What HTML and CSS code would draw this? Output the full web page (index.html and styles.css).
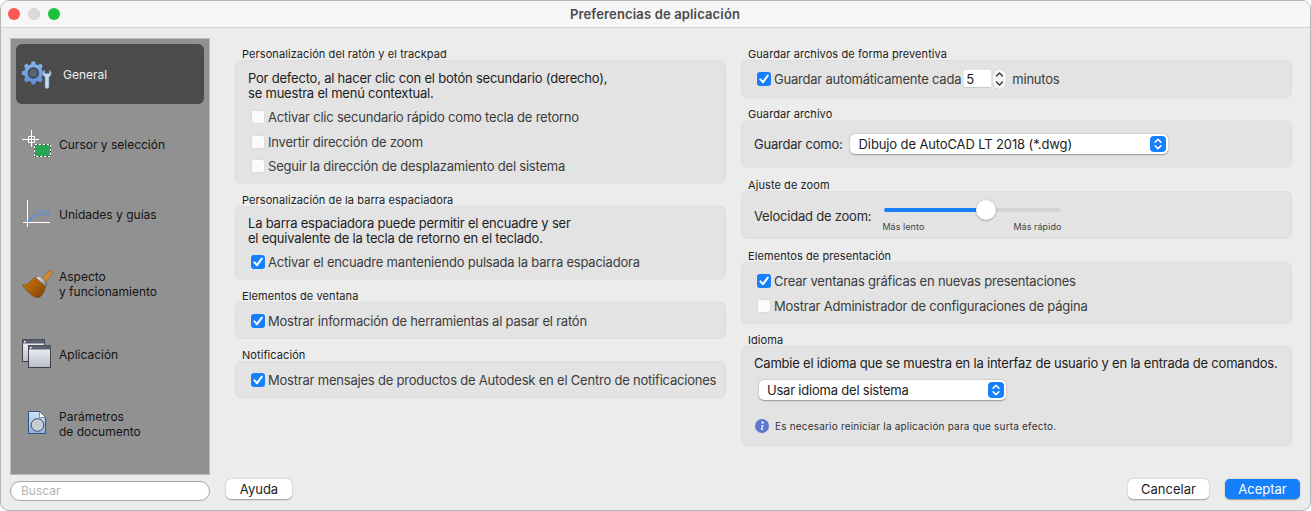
FILE: index.html
```html
<!DOCTYPE html>
<html lang="es">
<head>
<meta charset="utf-8">
<title>Preferencias de aplicación</title>
<link rel="stylesheet" href="styles.css">
</head>
<body>
<svg class="defs" width="0" height="0">
  <symbol id="check" viewBox="0 0 14 14"><path d="M3.4 7.4 L6 10.2 L10.8 3.6" fill="none" stroke="#fff" stroke-width="2" stroke-linecap="round" stroke-linejoin="round"/></symbol>
  <symbol id="updown" viewBox="0 0 16 16"><path d="M5 6.2 L8 3.4 L11 6.2 M5 9.8 L8 12.6 L11 9.8" fill="none" stroke="#fff" stroke-width="1.5" stroke-linecap="round" stroke-linejoin="round"/></symbol>
</svg>
<div class="window">
  <header class="titlebar">
    <div class="lights"><span class="light red"></span><span class="light grey"></span><span class="light green"></span></div>
    <div class="title">Preferencias de aplicación</div>
  </header>
  <div class="body">
    <aside class="side">
      <nav class="sidebar">
        <div class="nav-item selected">
          <svg class="nav-icon" width="32" height="32" viewBox="0 0 32 32">
            <defs><linearGradient id="gearg" x1="0" y1="0" x2="0" y2="1"><stop offset="0" stop-color="#8ab4ee"/><stop offset="1" stop-color="#5d8fd8"/></linearGradient></defs>
            <g transform="translate(1.2 1.8) scale(.86)">
              <path fill="url(#gearg)" d="M11 2 L15 2 L15.8 5.2 L18.4 6.2 L21.2 4.4 L24 7.2 L22.4 10 L23.4 12.6 L26.4 13.4 L26.4 17.4 L23.4 18.2 L22.4 20.8 L24 23.6 L21.2 26.4 L18.4 24.6 L15.8 25.6 L15 28.6 L11 28.6 L10.2 25.6 L7.6 24.6 L4.8 26.4 L2 23.6 L3.6 20.8 L2.6 18.2 L-.4 17.4 L-.4 13.4 L2.6 12.6 L3.6 10 L2 7.2 L4.8 4.4 L7.6 6.2 L10.2 5.2 Z"/>
              <circle cx="13" cy="15.3" r="6.6" fill="#3d4654"/><circle cx="13" cy="15.3" r="4.6" fill="#5b6472"/>
            </g>
            <path fill="#c7d8ee" stroke="#6c8fbf" stroke-width=".6" d="M22 14 L22 17 L24 19 L24 29 Q24 30.5 26 30.5 Q28 30.5 28 29 L28 19 L30 17 L30 14 L28.4 12 L28.4 15.5 L23.6 15.5 L23.6 12 Z"/>
          </svg>
          <span class="nav-label label-general">General</span>
        </div>
        <div class="nav-item">
          <svg class="nav-icon" width="32" height="32" viewBox="0 0 32 32">
            <path stroke="#fff" stroke-width="1" fill="none" d="M1 11.5 H18 M10.5 2 V19 M7.5 8.5 H13.5 V14.5 H7.5 Z"/>
            <rect x="13.5" y="16.5" width="16" height="12" fill="#2aa556" stroke="#333" stroke-width="1"/>
            <rect x="13.5" y="16.5" width="16" height="12" fill="none" stroke="#fff" stroke-dasharray="2.5 1.5"/>
          </svg>
          <span class="nav-label">Cursor y selección</span>
        </div>
        <div class="nav-item">
          <svg class="nav-icon" width="32" height="32" viewBox="0 0 32 32">
            <path stroke="#fff" stroke-width="1" fill="none" d="M6.5 2 V29 M2 24.5 H29"/>
            <path stroke="#4f8ff0" stroke-width="1.2" fill="none" d="M7 23.5 L13.5 17 H16"/>
            <text class="units-text" x="14.5" y="18">1.00</text>
          </svg>
          <span class="nav-label">Unidades y guías</span>
        </div>
        <div class="nav-item">
          <svg class="nav-icon" width="32" height="32" viewBox="0 0 32 32">
            <defs>
              <linearGradient id="brushg" x1="0" y1="0" x2="1" y2="1"><stop offset="0" stop-color="#d87a0a"/><stop offset="1" stop-color="#7a4206"/></linearGradient>
              <linearGradient id="ferr" x1="0" y1="0" x2="1" y2="1"><stop offset="0" stop-color="#f2f2f2"/><stop offset="1" stop-color="#777"/></linearGradient>
            </defs>
            <path fill="#cf8a33" stroke="#8a5a20" stroke-width=".5" d="M21 10 L28 3 Q30.5 1.5 31.5 3.5 Q32 5 30 7 L25 14 Z"/>
            <path fill="url(#ferr)" stroke="#444" stroke-width=".5" d="M14.5 9.5 Q18 7.5 20 9 L25.5 14 Q26 16 24.5 19 Z"/>
            <path fill="url(#brushg)" stroke="#5b3408" stroke-width=".4" d="M14.5 9.5 L24.5 19 Q23 26 19 29 Q16 30.5 12 28 Q6 24 1 17 Q6 17.5 9.5 13.5 Q11.5 10.5 14.5 9.5 Z"/>
          </svg>
          <span class="nav-label">Aspecto<br>y funcionamiento</span>
        </div>
        <div class="nav-item">
          <svg class="nav-icon" width="32" height="32" viewBox="0 0 32 32">
            <defs><linearGradient id="wing" x1="0" y1="0" x2="0" y2="1"><stop offset="0" stop-color="#f4f5f8"/><stop offset="1" stop-color="#b9bdc9"/></linearGradient></defs>
            <rect x="1.5" y="1.5" width="22" height="22" fill="url(#wing)" stroke="#3d4046"/>
            <rect x="1.5" y="1.5" width="22" height="4" fill="#5b6070"/>
            <rect x="3" y="3" width="1.5" height="1.5" fill="#fff"/>
            <rect x="7.5" y="7.5" width="22" height="22" fill="url(#wing)" stroke="#3d4046"/>
            <rect x="7.5" y="7.5" width="22" height="4" fill="#5b6070"/>
            <rect x="9" y="9" width="1.5" height="1.5" fill="#fff"/>
          </svg>
          <span class="nav-label">Aplicación</span>
        </div>
        <div class="nav-item">
          <svg class="nav-icon" width="32" height="32" viewBox="0 0 32 32">
            <defs><linearGradient id="docg" x1="0" y1="0" x2="0" y2="1"><stop offset="0" stop-color="#cfe0f6"/><stop offset="1" stop-color="#8fb2df"/></linearGradient></defs>
            <path fill="url(#docg)" stroke="#34527e" d="M7.5 3.5 H18.5 L24.5 9.5 V25.5 H7.5 Z"/>
            <path fill="#fff" stroke="#34527e" stroke-width=".6" d="M18.5 3.5 V9.5 H24.5 Z"/>
            <circle cx="16.5" cy="17" r="6.3" fill="#c9ccd2" stroke="#39506f"/>
          </svg>
          <span class="nav-label">Parámetros<br>de documento</span>
        </div>
      </nav>
      <div class="search">Buscar</div>
    </aside>
    <main class="main">
      <div class="columns">
        <div class="col col-left">
          <section class="group">
            <h2>Personalización del ratón y el trackpad</h2>
            <div class="panel p-mouse">
              <p class="desc">Por defecto, al hacer clic con el botón secundario (derecho),<br>se muestra el menú contextual.</p>
              <label class="row"><span class="box"></span>Activar clic secundario rápido como tecla de retorno</label>
              <label class="row"><span class="box"></span>Invertir dirección de zoom</label>
              <label class="row"><span class="box"></span>Seguir la dirección de desplazamiento del sistema</label>
            </div>
          </section>
          <section class="group">
            <h2>Personalización de la barra espaciadora</h2>
            <div class="panel p-space">
              <p class="desc">La barra espaciadora puede permitir el encuadre y ser<br>el equivalente de la tecla de retorno en el teclado.</p>
              <label class="row"><span class="box on"><svg width="14" height="14"><use href="#check"/></svg></span>Activar el encuadre manteniendo pulsada la barra espaciadora</label>
            </div>
          </section>
          <section class="group">
            <h2>Elementos de ventana</h2>
            <div class="panel p-single">
              <label class="row"><span class="box on"><svg width="14" height="14"><use href="#check"/></svg></span>Mostrar información de herramientas al pasar el ratón</label>
            </div>
          </section>
          <section class="group">
            <h2>Notificación</h2>
            <div class="panel p-single">
              <label class="row"><span class="box on"><svg width="14" height="14"><use href="#check"/></svg></span>Mostrar mensajes de productos de Autodesk en el Centro de notificaciones</label>
            </div>
          </section>
        </div>
        <div class="col col-right">
          <section class="group">
            <h2>Guardar archivos de forma preventiva</h2>
            <div class="panel p-auto">
              <label class="row"><span class="box on"><svg width="14" height="14"><use href="#check"/></svg></span>Guardar automáticamente cada<span class="num">5</span>
                <span class="stepper"><svg width="13" height="20" viewBox="0 0 13 20"><path d="M3.5 7 L6.5 4 L9.5 7 M3.5 13 L6.5 16 L9.5 13" fill="none" stroke="#333" stroke-width="1.3" stroke-linecap="round" stroke-linejoin="round"/></svg></span>
                <span class="unit">minutos</span></label>
            </div>
          </section>
          <section class="group">
            <h2>Guardar archivo</h2>
            <div class="panel p-save">
              <span class="field-label">Guardar como:</span>
              <div class="select sel-save">Dibujo de AutoCAD LT 2018 (*.dwg)<span class="sel-btn"><svg width="16" height="16"><use href="#updown"/></svg></span></div>
            </div>
          </section>
          <section class="group tall">
            <h2>Ajuste de zoom</h2>
            <div class="panel p-zoom">
              <span class="field-label">Velocidad de zoom:</span>
              <div class="slider">
                <div class="track"><div class="fill"></div><div class="knob"></div></div>
                <div class="ticks"><span>Más lento</span><span>Más rápido</span></div>
              </div>
            </div>
          </section>
          <section class="group tall">
            <h2>Elementos de presentación</h2>
            <div class="panel p-layout">
              <label class="row"><span class="box on"><svg width="14" height="14"><use href="#check"/></svg></span>Crear ventanas gráficas en nuevas presentaciones</label>
              <label class="row"><span class="box"></span>Mostrar Administrador de configuraciones de página</label>
            </div>
          </section>
          <section class="group">
            <h2>Idioma</h2>
            <div class="panel p-lang">
              <p class="desc">Cambie el idioma que se muestra en la interfaz de usuario y en la entrada de comandos.</p>
              <div class="select sel-lang">Usar idioma del sistema<span class="sel-btn"><svg width="16" height="16"><use href="#updown"/></svg></span></div>
              <div class="note">
                <svg width="14" height="14" viewBox="0 0 14 14"><circle cx="7" cy="7" r="7" fill="#5a78cf"/><circle cx="7.6" cy="3.6" r="1.2" fill="#fff"/><path d="M6.7 6 H8.4 L7.4 10.4 H8.4 L8.2 11 H5.9 L6.9 6.6 H6.5 Z" fill="#fff"/></svg>
                <span>Es necesario reiniciar la aplicación para que surta efecto.</span>
              </div>
            </div>
          </section>
        </div>
      </div>
      <footer class="footer">
        <button class="btn btn-help">Ayuda</button>
        <div class="actions">
          <button class="btn btn-cancel">Cancelar</button>
          <button class="btn btn-ok">Aceptar</button>
        </div>
      </footer>
    </main>
  </div>
</div>
</body>
</html>
```
FILE: styles.css
```css
* { box-sizing: border-box; }
html, body { margin: 0; padding: 0; height: 100%; background: #fff; }
body { font-family: Inter, "Liberation Sans", sans-serif; font-size: 13px; color: #1d1d1d; overflow: hidden; }
.defs { position: absolute; }
.window { width: 1311px; height: 511px; background: #ececec; border: 1px solid #b5b5b5; border-radius: 9px; overflow: hidden; display: flex; flex-direction: column; }
.titlebar { height: 28px; margin-top: -1px; flex: none; background: #f6f6f6; border-bottom: 1px solid #d3d3d3; position: relative; display: flex; align-items: center; justify-content: center; }
.title { font-size: 13px; font-weight: 600; color: #4a4a4a; letter-spacing: 0.15px; margin-left: -1px; }
.lights { position: absolute; left: 7px; top: 8px; display: flex; gap: 8px; }
.light { width: 12px; height: 12px; border-radius: 50%; }
.red { background: #fc5753; }
.grey { background: #dcdcdc; border: 1px solid #cfcfcf; }
.green { background: #1bc13f; }
.body { flex: 1; display: flex; padding: 10px 10px 9px 9px; min-height: 0; }
.side { width: 200px; flex: none; display: flex; flex-direction: column; }
.sidebar { height: 437px; flex: none; background: #919191; border: 1px solid #bdbdbd; padding: 5px; display: flex; flex-direction: column; gap: 10px; }
.nav-item { height: 60px; flex: none; display: flex; align-items: center; padding-left: 5px; border-radius: 6px; color: #141414; font-size: 12px; line-height: 15px; }
.nav-item.selected { background: #4b4b4b; color: #eee; }
.nav-icon { flex: none; margin-right: 6px; }
.nav-label { display: block; }
.label-general { margin-left: 4px; }
.units-text { font-size: 7.5px; fill: #4f8ff0; letter-spacing: -0.2px; }
.search { margin-top: 6px; height: 20px; flex: none; background: #fff; border: 1px solid #a5a5a5; border-radius: 10px; color: #b4b4b4; font-size: 12px; line-height: 18px; padding-left: 10px; }
.main { flex: 1; min-width: 0; display: flex; flex-direction: column; margin-left: 16px; }
.columns { flex: 1; display: flex; gap: 15px; padding-left: 9px; padding-right: 8px; }
.col-left { width: 491px; flex: none; }
.col-right { flex: 1; min-width: 0; }
.group h2 { margin: 0; height: 22px; padding: 10px 0 0 7px; font-size: 11px; font-weight: 400; line-height: 13px; color: #222; letter-spacing: 0.08px; }
.group.tall h2 { height: 23px; padding-top: 11px; }
.panel { background: #e3e3e3; border: 1px solid #dedede; border-radius: 6px; }
.desc { margin: 0; line-height: 15px; color: #1d1d1d; letter-spacing: -0.21px; }
.row { display: flex; align-items: center; height: 15px; color: #3c3c3c; letter-spacing: -0.21px; white-space: nowrap; }
.box { width: 14px; height: 14px; flex: none; margin-right: 3px; border-radius: 3px; background: #fbfbfb; border: 1px solid #dcdcdc; display: block; }
.box.on { background: #167ffc; border: none; }
.box svg { display: block; }
.p-mouse { height: 124px; padding: 10px 15px 0; }
.p-mouse .desc { margin-left: -3px; }
.p-mouse .row { margin-top: 10px; }
.p-mouse .desc + .row { margin-top: 8px; }
.p-mouse .row:last-child { margin-top: 9px; }
.p-space { height: 74px; padding: 9px 15px 0 12px; }
.p-space .row { margin-top: 8px; margin-left: 3px; }
.p-single { height: 37px; padding: 10px 15px; }
.p-auto { height: 38px; padding: 10px 15px; }
.num { width: 27px; height: 18px; flex: none; background: #fff; border-bottom: 1px solid #c9c9c9; color: #1d1d1d; margin-left: 3px; padding-left: 2px; line-height: 18px; }
.stepper { width: 13px; height: 20px; flex: none; margin-left: 2px; background: #f5f5f5; border-radius: 6px; box-shadow: 0 0 1px rgba(0,0,0,.35); display: block; }
.stepper svg { display: block; }
.unit { margin-left: 6px; }
.field-label { color: #2b2b2b; letter-spacing: -0.21px; }
.p-save { height: 48px; padding: 0 12px; display: flex; align-items: center; }
.select { background: #fff; border-radius: 5px; box-shadow: 0 .5px 1.5px rgba(0,0,0,.35); height: 20px; position: relative; color: #1d1d1d; line-height: 20px; padding-left: 8px; letter-spacing: -0.21px; }
.sel-save { width: 318px; margin-left: 7px; padding-left: 9px; letter-spacing: -0.12px; }
.sel-lang { width: 247px; margin: 9px 0 0 5px; }
.sel-btn { position: absolute; right: 2px; top: 2px; width: 16px; height: 16px; background: #167ffc; border-radius: 4px; display: block; }
.sel-btn svg { display: block; }
.p-zoom { height: 48px; padding: 0 12px; display: flex; align-items: center; }
.p-zoom .field-label { margin-top: 1px; }
.slider { width: 179px; margin-left: 11px; margin-top: 10px; }
.track { height: 4px; background: #d4d4d4; border-radius: 2px; position: relative; margin: 0 1px 0 2px; }
.fill { width: 102px; height: 4px; background: #167ffc; border-radius: 2px; }
.knob { position: absolute; left: 92px; top: -8px; width: 20px; height: 20px; background: #fff; border-radius: 50%; box-shadow: 0 .5px 2px rgba(0,0,0,.4); }
.ticks { display: flex; justify-content: space-between; font-size: 9px; line-height: 11px; margin-top: 9px; color: #444; letter-spacing: 0.05px; }
.p-layout { height: 62px; padding: 10px 15px 0; }
.p-layout .row + .row { margin-top: 10px; }
.p-lang { height: 100px; padding: 9px 12px 0; }
.note { display: flex; align-items: center; gap: 6px; margin-top: 19px; margin-left: 1px; font-size: 10px; line-height: 14px; color: #333; letter-spacing: 0.19px; }
.note svg { flex: none; }
.footer { flex: none; height: 20px; margin-bottom: 2px; display: flex; justify-content: space-between; }
.actions { display: flex; gap: 16px; }
.btn { height: 20px; padding: 0; border: none; border-radius: 5px; background: #fff; font: inherit; color: #1d1d1d; box-shadow: 0 .5px 1.5px rgba(0,0,0,.35); line-height: 20px; }
.btn-help { width: 66px; }
.btn-cancel { width: 81px; }
.btn-ok { width: 75px; background: #167ffc; color: #fff; }
```
